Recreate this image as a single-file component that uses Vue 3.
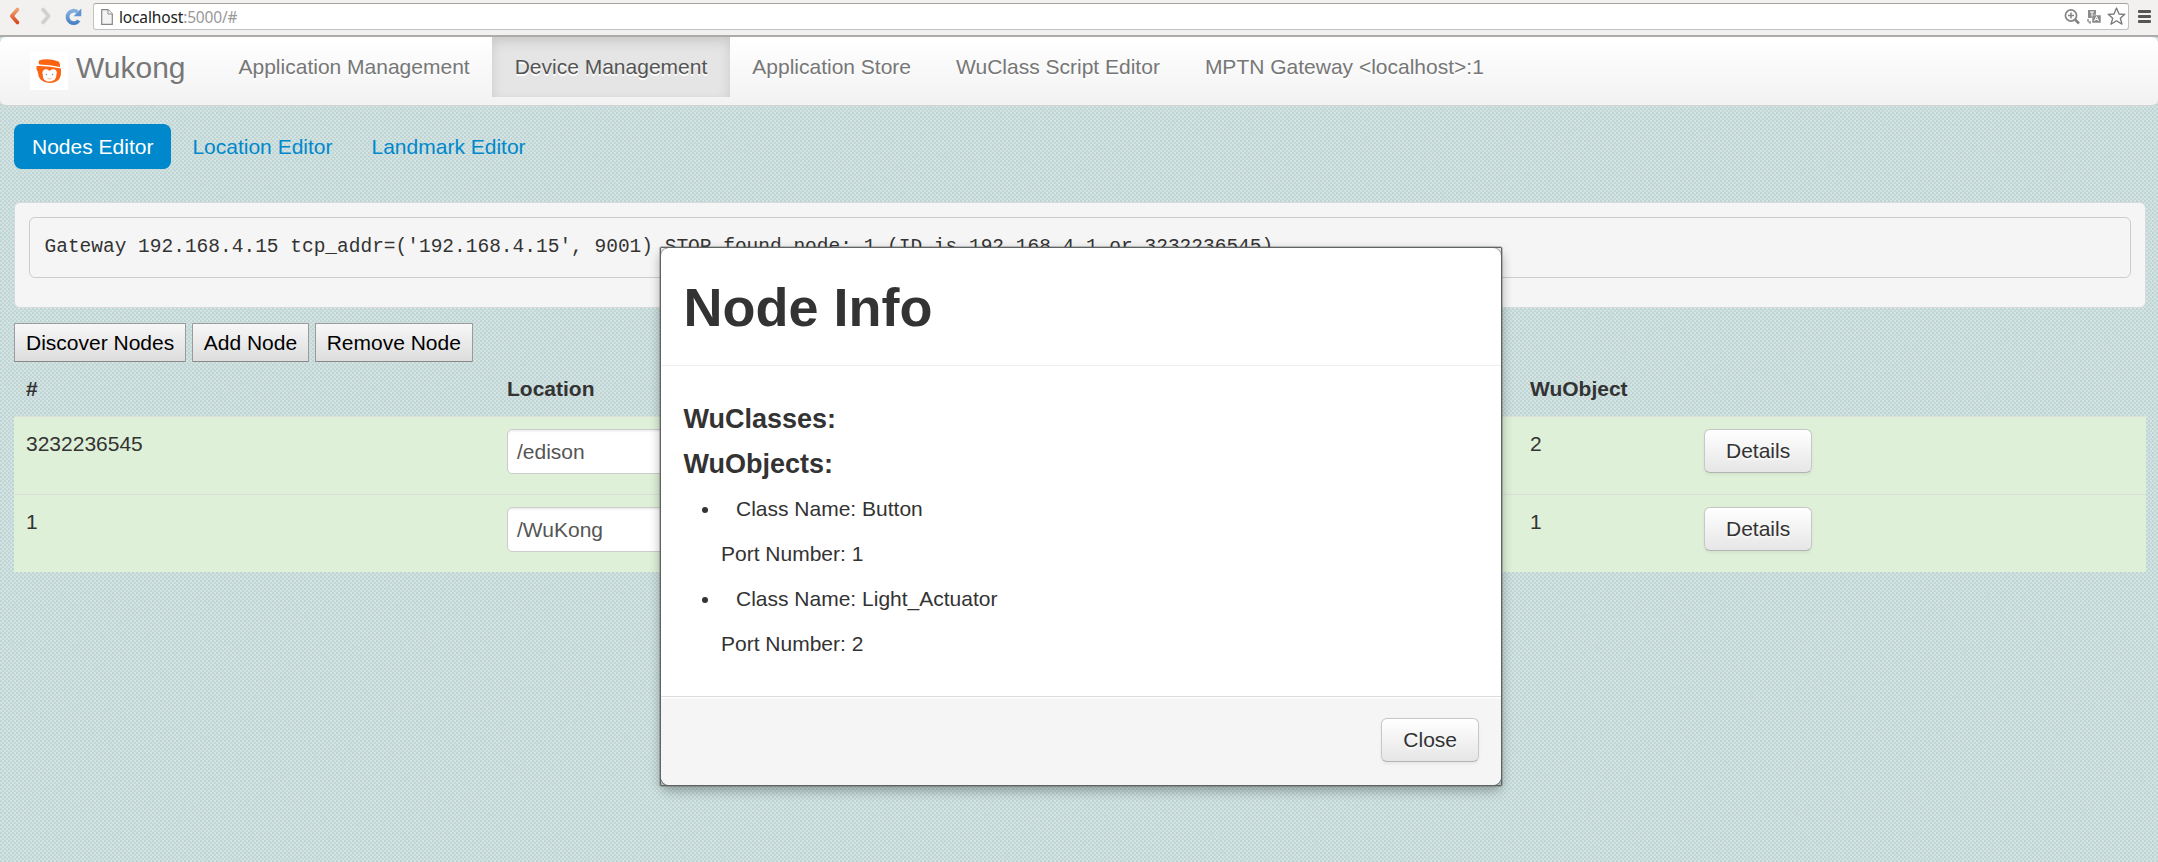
<script setup>
const tabs = ['Application Management', 'Device Management', 'Application Store', 'WuClass Script Editor', 'MPTN Gateway <localhost>:1']
const pills = ['Nodes Editor', 'Location Editor', 'Landmark Editor']
const actions = ['Discover Nodes', 'Add Node', 'Remove Node']
const nodes = [
  { id: '3232236545', location: '/edison', objects: 2 },
  { id: '1', location: '/WuKong', objects: 1 },
]
const wuObjects = [
  { name: 'Button', port: 1 },
  { name: 'Light_Actuator', port: 2 },
]
</script>

<template>
  <div class="page">
    <svg class="weave" width="2158" height="862">
      <defs>
        <pattern id="dots" width="4" height="4" patternUnits="userSpaceOnUse">
          <rect width="4" height="4" fill="#d0e1e0" />
          <rect x="0" y="0" width="2" height="2" fill="#bfd3d3" />
          <rect x="2" y="2" width="2" height="2" fill="#c3d7d7" />
          <rect x="2" y="0" width="2" height="1" fill="#d8e8e7" />
          <rect x="0" y="2" width="2" height="1" fill="#d5e6e5" />
        </pattern>
        <filter id="grain" x="0" y="0" width="100%" height="100%">
          <feTurbulence type="fractalNoise" baseFrequency="0.22" numOctaves="3" seed="4" />
          <feColorMatrix values="0 0 0 0 0.55  0 0 0 0 0.69  0 0 0 0 0.69  1.3 0 0 0 -0.56" />
        </filter>
      </defs>
      <rect width="2158" height="862" fill="url(#dots)" />
      <rect width="2158" height="862" filter="url(#grain)" />
    </svg>

    <header class="chrome">
      <svg class="back" width="93" height="36" viewBox="0 0 93 36">
        <defs>
          <linearGradient id="og" x1="0" y1="0" x2="0" y2="1"><stop offset="0" stop-color="#f0a070" /><stop offset="1" stop-color="#d9481c" /></linearGradient>
          <linearGradient id="bl" x1="0" y1="0" x2="0" y2="1"><stop offset="0" stop-color="#85b0de" /><stop offset="1" stop-color="#4a84c4" /></linearGradient>
        </defs>
        <path d="M17.500 9.500 11.800 16 17.500 22.500" fill="none" stroke="url(#og)" stroke-width="3.600" stroke-linecap="round" stroke-linejoin="round" />
        <path d="M43 9.500 48.700 16 43 22.500" fill="none" stroke="#d2d0ce" stroke-width="3.600" stroke-linecap="round" stroke-linejoin="round" />
        <path d="M78.800 20.500A6.200 6.200 0 1 1 77.500 12" fill="none" stroke="url(#bl)" stroke-width="3.800" />
        <path d="M81.300 8.500V16.200H73.600Z" fill="#5f95d0" />
      </svg>
      <div class="address">
        <svg width="12" height="16" viewBox="0 0 12 16"><path d="M.7.7H7L11.300 5V15.300H.7Z" fill="#f4f4f4" stroke="#888" stroke-width="1.200" /><path d="M7 .7V5H11.300" fill="#fff" stroke="#888" /></svg>
        <span class="url">localhost<i>:5000/#</i></span>
        <svg class="tools" width="64" height="20" viewBox="0 0 64 20">
          <circle cx="7" cy="8.500" r="5.600" fill="none" stroke="#858585" stroke-width="1.700" />
          <path d="M7 5.500V11.500M4 8.500H10" stroke="#858585" stroke-width="1.500" />
          <path d="M11 12.500 15 16.500" stroke="#858585" stroke-width="2.600" />
          <path d="M24 3H32V11H24Z" fill="#8b8b8b" />
          <path d="M26 5H30M28 5V9" stroke="#fff" />
          <path d="M28 8H37V16H28Z" fill="#8b8b8b" stroke="#fff" stroke-width=".5" />
          <path d="M30.500 14 32.500 9.500 34.500 14M31 12.500H34" fill="none" stroke="#fff" />
          <path d="M24 12V15H27M23 13H25M26 14V17" fill="none" stroke="#8b8b8b" />
          <path d="M52.500 1 55 7 60.800 7.300 56.300 11.200 58 17.200 52.500 13.800 47 17.200 48.700 11.200 44.200 7.300 50 7Z" fill="#fff" stroke="#777" stroke-width="1.300" stroke-linejoin="round" />
        </svg>
      </div>
      <div class="menu"><b></b><b></b><b></b></div>
    </header>

    <nav class="navbar">
      <div class="brand">
        <svg width="38" height="38" viewBox="0 0 38 38">
          <rect width="38" height="38" fill="#fff" />
          <path d="M9 8.500Q18 5.500 28.500 9.500Q30.500 11 30 15Q20 12.500 9.500 12.500Q8 10.500 9 8.500Z" fill="#fb6412" />
          <path d="M6.500 14Q18 13.500 31 16.500L31 20.500Q31 30.500 19.500 31Q8.500 30.500 7.800 20L6.500 17Z" fill="#fb6412" />
          <path d="M19.500 19C16 15 11 18.500 12.800 22.500C12.500 28 16 29.500 19.500 29.500C23 29.500 26.500 27.500 26.400 22.500C28.500 18 23 15 19.500 19Z" fill="#fff" />
          <circle cx="16.500" cy="22.500" r=".7" fill="#888" /><circle cx="22.500" cy="22.500" r=".7" fill="#888" />
          <path d="M17.500 26.500Q19.500 27.500 21.500 26.500" fill="none" stroke="#fb9a66" stroke-width=".7" />
        </svg>
        <span>Wukong</span>
      </div>
      <a v-for="(tab, i) in tabs" :key="tab" class="tab" :class="{ active: i === 1 }">{{ tab }}</a>
    </nav>

    <main>
      <div class="pills"><a v-for="(pill, i) in pills" :key="pill" :class="{ active: i === 0 }">{{ pill }}</a></div>
      <div class="well"><pre>Gateway 192.168.4.15 tcp_addr=('192.168.4.15', 9001) STOP found node: 1 (ID is 192.168.4.1 or 3232236545)</pre></div>
      <div class="actions"><button v-for="action in actions" :key="action">{{ action }}</button></div>
      <div class="grid head"><span>#</span><span>Location</span><span>WuObject</span></div>
      <div v-for="node in nodes" :key="node.id" class="grid row">
        <span>{{ node.id }}</span>
        <div><div class="field">{{ node.location }}</div></div>
        <span>{{ node.objects }}</span>
        <div><button class="btn">Details</button></div>
      </div>
    </main>

    <section class="modal">
      <div class="title"><h1>Node Info</h1></div>
      <div class="body">
        <h4>WuClasses:</h4>
        <h4>WuObjects:</h4>
        <ul>
          <template v-for="item in wuObjects" :key="item.port">
            <li>Class Name: {{ item.name }}</li>
            <p>Port Number: {{ item.port }}</p>
          </template>
        </ul>
      </div>
      <footer><button class="btn">Close</button></footer>
    </section>
  </div>
</template>

<style>
body { margin: 0; overflow: hidden; }
</style>

<style scoped>
.page { position: relative; width: 2158px; height: 862px; overflow: hidden; background: #cadcdb; color: #333; font: 21px/30px "Liberation Sans", Arial, sans-serif; }
.page * { box-sizing: border-box; }
.weave { position: absolute; inset: 0; }
.chrome { position: relative; display: flex; height: 37px; background: #f2f1f0; border-bottom: 2px solid #adabaa; }
.back { width: 93px; flex: none; }
.address { display: flex; align-items: center; width: 2036px; height: 27px; margin-top: 3px; padding: 0 0 0 7px; background: #fff; border: 1px solid #c3c1bf; border-top-color: #a5a3a1; border-radius: 3px; }
.url { margin-left: 6px; font: 15.500px/24px "Noto Sans", sans-serif; color: #222; letter-spacing: -.15px; }
.url i { font-style: normal; color: #999; }
.tools { margin-left: auto; }
.menu { display: flex; flex-direction: column; gap: 2px; margin: 10px 0 0 9px; }
.menu b { width: 13px; height: 3px; border-radius: 1px; background: #555; }
.navbar { position: relative; display: flex; height: 69px; background: linear-gradient(#fff, #f2f2f2); border-bottom: 1px solid #d4d4d4; border-radius: 6px; padding-left: 30px; }
.brand { display: flex; width: 186px; color: #777; font-size: 30px; text-shadow: 0 1px 0 #fff; }
.brand svg { margin-top: 15px; flex: none; }
.brand span { margin: 16px 0 0 8px; }
.tab { height: 60px; padding: 15px 22.500px; color: #777; text-shadow: 0 1.500px 0 #fff; white-space: nowrap; }
.tab.active { color: #555; background: #e5e5e5; box-shadow: inset 0 4.500px 12px rgba(0, 0, 0, .125); }
main { position: relative; padding: 18px 12px 0 14px; }
.pills { display: flex; gap: 3px; height: 45px; }
.pills a { padding: 8px 18px 7px; color: #08c; border-radius: 7.500px; }
.pills a.active { color: #fff; background: #08c; }
.well { height: 106px; margin-top: 33px; padding: 14px; background: #f5f5f5; border: 1px solid #d6dada; border-radius: 6px; }
pre { height: 61px; margin: 0; padding: 14px 14.500px; border: 1px solid #ccc; border-radius: 6px; font: 19.500px/30px "Liberation Mono", monospace; }
.actions { display: flex; gap: 5.500px; margin-top: 15px; }
.actions button { height: 39px; padding: 0 11px; font: 21px/30px "Liberation Sans", sans-serif; color: #000; background: linear-gradient(#f7f7f7, #ddd); border: 1px solid #9b9b9b; border-bottom-color: #888; border-radius: 1px; }
.grid { display: grid; grid-template-columns: 481px 1023px 174px 1fr; }
.grid > * { padding: 12px 12px 0; }
.head { height: 54px; font-weight: bold; }
.row { height: 78px; background: #dff0d8; border-top: 1px solid #dcdedc; }
.field { width: 330px; height: 45px; padding: 7px 9px; color: #555; background: #fff; border: 1px solid #ccc; border-radius: 5px; box-shadow: inset 0 1.500px 1.500px rgba(0, 0, 0, .075); }
.btn { display: block; height: 44px; padding: 0 21px 1px; color: #333; font: 21px/30px "Liberation Sans", sans-serif; text-shadow: 0 1.500px 1.500px rgba(255, 255, 255, .75); background: linear-gradient(#fff, #e6e6e6); border: 1px solid #c8c8c8; border-bottom-color: #b3b3b3; border-radius: 6px; box-shadow: inset 0 1px 0 rgba(255, 255, 255, .2), 0 1.500px 3px rgba(0, 0, 0, .06); }
.modal { position: absolute; z-index: 2; left: 660px; top: 247px; width: 842px; height: 539px; background: #fff; background-clip: padding-box; border: 1px solid rgba(0, 0, 0, .3); border-radius: 9px; box-shadow: 0 4.500px 10.500px rgba(0, 0, 0, .3); }
.modal::after { content: ""; position: absolute; inset: -1px; border: 1px solid #5f6463; border-radius: 1px; box-shadow: 0 0 0 .5px rgba(80, 85, 85, .6); pointer-events: none; }
.title { height: 118px; padding: 29px 22.500px 0; border-bottom: 1px solid #eee; }
h1 { margin: 0; font-size: 54px; line-height: 60px; }
.body { height: 330px; padding: 38px 22.500px 0; }
h4 { margin: 0 0 15px; font-size: 27px; line-height: 30px; }
ul { margin: 0; padding-left: 37.500px; }
li { padding-left: 15px; margin-bottom: 15px; }
p { margin: 0 0 15px; }
footer { display: flex; justify-content: flex-end; height: 89px; padding: 21px 22px 0; background: #f5f5f5; border-top: 1px solid #ddd; border-radius: 0 0 9px 9px; box-shadow: inset 0 1.500px 0 #fff; }
</style>
